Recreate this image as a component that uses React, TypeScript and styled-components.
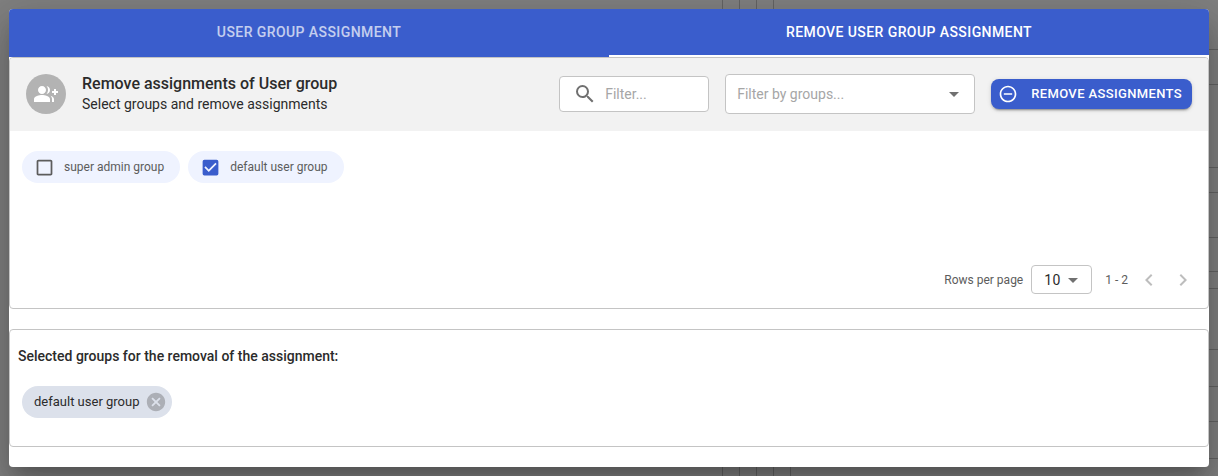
import React, { useState } from "react";
import styled, { createGlobalStyle } from "styled-components";
import {
  MdArrowDropDown,
  MdCancel,
  MdCheckBox,
  MdCheckBoxOutlineBlank,
  MdChevronLeft,
  MdChevronRight,
  MdGroupAdd,
  MdRemoveCircleOutline,
  MdSearch,
} from "react-icons/md";

const color = {
  primary: "#3a5dcc",
  border: "#c4c4c4",
  header: "#f2f2f2",
  text: "#2b2b2b",
  muted: "#5c5c5c",
  placeholder: "#a6a6a6",
  icon: "#707070",
  disabled: "#bdbdbd",
};

/* Ruled lines of the dimmed page that stays visible behind the dialog. */
const rowLines = [49, 84, 167, 192, 237, 271, 288, 349, 386, 421, 458];
const columnLines = [722, 739, 756, 773, 790];

const ruled = [
  ...columnLines.map(
    (x, i) =>
      `linear-gradient(#646464, #646464) ${x}px ${i === 4 ? "100%" : "0"} / 1px ${i === 4 ? "50%" : "100%"} no-repeat`
  ),
  ...rowLines.map(
    (y) => `linear-gradient(#646464, #646464) 100% ${y}px / 30% 1px no-repeat`
  ),
].join(", ");

const GlobalStyle = createGlobalStyle`
  *, *::before, *::after { box-sizing: border-box; }
  body {
    margin: 0;
    color: ${color.text};
    font-family: Roboto, "Liberation Sans", sans-serif;
    font-size: 14px;
    line-height: 20px;
  }
  button, input, select { font: inherit; color: inherit; margin: 0; }
`;

const Backdrop = styled.div`
  min-height: 100vh;
  padding: 9px;
  background: ${ruled}, #808080;
`;

const Dialog = styled.div`
  overflow: hidden;
  padding-bottom: 20px;
  border-radius: 4px;
  background: #fff;
  box-shadow: 0 11px 15px -7px rgba(0, 0, 0, 0.2),
    0 24px 38px 3px rgba(0, 0, 0, 0.14), 0 9px 46px 8px rgba(0, 0, 0, 0.12);
`;

const TabList = styled.div`
  display: flex;
  background: ${color.primary};
`;

const Tab = styled.button<{ $active: boolean }>`
  flex: 1;
  height: 48px;
  padding: 0 16px 2px;
  border: 0;
  background: none;
  color: #fff;
  font-weight: 500;
  letter-spacing: 0.03em;
  text-transform: uppercase;
  cursor: pointer;
  box-shadow: ${(p) => (p.$active ? "inset 0 -2px #fff" : "none")};

  span {
    opacity: ${(p) => (p.$active ? 1 : 0.7)};
  }
`;

const Card = styled.section`
  overflow: hidden;
  border: 1px solid ${color.border};
  border-radius: 4px;

  & + & {
    margin-top: 20px;
  }
`;

const CardHeader = styled.header`
  display: flex;
  align-items: center;
  gap: 16px;
  min-height: 73px;
  padding: 0 16px 1px;
  background: ${color.header};
`;

const Avatar = styled.div`
  display: grid;
  place-items: center;
  width: 40px;
  height: 40px;
  border-radius: 50%;
  background: #b3b3b3;
  color: #fff;
`;

const Heading = styled.div`
  flex: 1;
`;

const Title = styled.h1`
  margin: 0;
  font-size: 16px;
  font-weight: 500;
  line-height: 20px;
`;

const Subtitle = styled.p`
  margin: 0;
`;

const SearchBox = styled.label`
  display: flex;
  align-items: center;
  gap: 8px;
  width: 150px;
  height: 36px;
  padding: 0 13px;
  border: 1px solid ${color.border};
  border-radius: 4px;
  background: #fff;
  color: ${color.icon};

  svg {
    flex: none;
  }
`;

const SearchInput = styled.input`
  min-width: 0;
  width: 100%;
  padding: 0;
  border: 0;
  outline: 0;
  background: none;

  &::placeholder {
    color: ${color.placeholder};
    opacity: 1;
  }
`;

const SelectBox = styled.div<{ $compact?: boolean }>`
  display: grid;
  align-items: center;
  justify-items: end;
  width: ${(p) => (p.$compact ? "61px" : "250px")};
  height: ${(p) => (p.$compact ? "29px" : "40px")};
  padding-right: ${(p) => (p.$compact ? "6px" : "8px")};
  border: 1px solid ${color.border};
  border-radius: 4px;
  background: #fff;
  color: ${color.icon};

  > * {
    grid-area: 1 / 1;
  }

  svg {
    pointer-events: none;
  }
`;

const Select = styled.select<{ $placeholder?: boolean }>`
  appearance: none;
  width: 100%;
  height: 100%;
  padding: 0 ${(p) => (p.$placeholder ? "11px" : "12px")};
  border: 0;
  outline: 0;
  background: none;
  color: ${(p) => (p.$placeholder ? color.placeholder : color.text)};
`;

const RemoveButton = styled.button`
  display: flex;
  align-items: center;
  gap: 13px;
  height: 30px;
  padding: 0 10px 0 7px;
  border: 0;
  border-radius: 8px;
  background: ${color.primary};
  color: #fff;
  font-size: 13px;
  font-weight: 500;
  letter-spacing: 0.028em;
  text-transform: uppercase;
  white-space: nowrap;
  cursor: pointer;
  box-shadow: 0 3px 1px -2px rgba(0, 0, 0, 0.2),
    0 2px 2px 0 rgba(0, 0, 0, 0.14), 0 1px 5px 0 rgba(0, 0, 0, 0.12);
`;

const OptionList = styled.div`
  display: flex;
  flex-wrap: wrap;
  align-content: flex-start;
  gap: 8px;
  min-height: 120px;
  padding: 20px 12px;
`;

const OptionChip = styled.label`
  display: flex;
  align-items: center;
  gap: 9px;
  height: 32px;
  padding: 0 16px 0 12px;
  border-radius: 16px;
  background: #eff3ff;
  color: ${color.muted};
  font-size: 12px;
  cursor: pointer;
`;

const CheckMark = styled.span<{ $checked: boolean }>`
  display: grid;
  color: ${(p) => (p.$checked ? color.primary : color.muted)};

  > * {
    grid-area: 1 / 1;
  }
`;

const CheckInput = styled.input`
  appearance: none;
  width: 100%;
  height: 100%;
  cursor: pointer;
`;

const Pagination = styled.footer`
  display: flex;
  align-items: center;
  justify-content: flex-end;
  min-height: 57px;
  padding: 0 13px;
  color: ${color.muted};
  font-size: 12px;

  ${Select} {
    font-size: 14px;
    letter-spacing: 0.03em;
  }
`;

const RowsLabel = styled.label`
  margin-right: 8px;
`;

const Range = styled.span`
  margin: 0 9px 0 13px;
`;

const PageButton = styled.button`
  display: grid;
  place-items: center;
  width: 24px;
  height: 24px;
  padding: 0;
  border: 0;
  background: none;
  color: ${color.disabled};

  & + & {
    margin-left: 10px;
  }
`;

const Selection = styled.div`
  display: flex;
  flex-direction: column;
  min-height: 116px;
  padding: 16px 8px 28px;
`;

const SelectionTitle = styled.h2`
  margin: 0 0 20px;
  font-size: 14px;
  font-weight: 500;
  line-height: 20px;
`;

const ChipRow = styled.div`
  display: flex;
  gap: 8px;
  padding: 0 4px;
`;

const SelectedChip = styled.span`
  display: flex;
  align-items: center;
  gap: 6px;
  height: 32px;
  padding: 0 5px 0 12px;
  border-radius: 16px;
  background: #dce1eb;
  font-size: 13px;
`;

const ChipRemove = styled.button`
  display: grid;
  padding: 0;
  border: 0;
  background: none;
  color: #acafb6;
  cursor: pointer;
`;

const groups = ["super admin group", "default user group"];
const tabs = ["User group assignment", "Remove user group assignment"];

export default function App() {
  const [tab, setTab] = useState(1);
  const [selected, setSelected] = useState<string[]>(["default user group"]);

  const toggle = (name: string) =>
    setSelected((now) =>
      now.includes(name) ? now.filter((n) => n !== name) : [...now, name]
    );

  return (
    <>
      <GlobalStyle />
      <Backdrop>
        <Dialog role="dialog" aria-labelledby="dialog-title">
          <TabList role="tablist">
            {tabs.map((name, i) => (
              <Tab
                key={name}
                type="button"
                role="tab"
                aria-selected={tab === i}
                $active={tab === i}
                onClick={() => setTab(i)}
              >
                <span>{name}</span>
              </Tab>
            ))}
          </TabList>

          <Card>
            <CardHeader>
              <Avatar>
                <MdGroupAdd size={24} />
              </Avatar>
              <Heading>
                <Title id="dialog-title">Remove assignments of User group</Title>
                <Subtitle>Select groups and remove assignments</Subtitle>
              </Heading>
              <SearchBox>
                <MdSearch size={24} />
                <SearchInput type="text" placeholder="Filter..." aria-label="Filter" />
              </SearchBox>
              <SelectBox>
                <Select $placeholder defaultValue="" aria-label="Filter by groups">
                  <option value="">Filter by groups...</option>
                  {groups.map((name) => (
                    <option key={name}>{name}</option>
                  ))}
                </Select>
                <MdArrowDropDown size={24} />
              </SelectBox>
              <RemoveButton type="button">
                <MdRemoveCircleOutline size={20} />
                Remove assignments
              </RemoveButton>
            </CardHeader>

            <OptionList>
              {groups.map((name) => {
                const checked = selected.includes(name);
                return (
                  <OptionChip key={name}>
                    <CheckMark $checked={checked}>
                      {checked ? (
                        <MdCheckBox size={21} />
                      ) : (
                        <MdCheckBoxOutlineBlank size={21} />
                      )}
                      <CheckInput
                        type="checkbox"
                        checked={checked}
                        onChange={() => toggle(name)}
                      />
                    </CheckMark>
                    {name}
                  </OptionChip>
                );
              })}
            </OptionList>

            <Pagination>
              <RowsLabel htmlFor="rows-per-page">Rows per page</RowsLabel>
              <SelectBox $compact>
                <Select id="rows-per-page" defaultValue="10">
                  <option>10</option>
                  <option>25</option>
                  <option>50</option>
                </Select>
                <MdArrowDropDown size={24} />
              </SelectBox>
              <Range>1 - 2</Range>
              <PageButton type="button" disabled aria-label="Previous page">
                <MdChevronLeft size={24} />
              </PageButton>
              <PageButton type="button" disabled aria-label="Next page">
                <MdChevronRight size={24} />
              </PageButton>
            </Pagination>
          </Card>

          <Card>
            <Selection>
              <SelectionTitle>
                Selected groups for the removal of the assignment:
              </SelectionTitle>
              <ChipRow>
                {selected.map((name) => (
                  <SelectedChip key={name}>
                    {name}
                    <ChipRemove
                      type="button"
                      aria-label={`Remove ${name}`}
                      onClick={() => toggle(name)}
                    >
                      <MdCancel size={22} />
                    </ChipRemove>
                  </SelectedChip>
                ))}
              </ChipRow>
            </Selection>
          </Card>
        </Dialog>
      </Backdrop>
    </>
  );
}
